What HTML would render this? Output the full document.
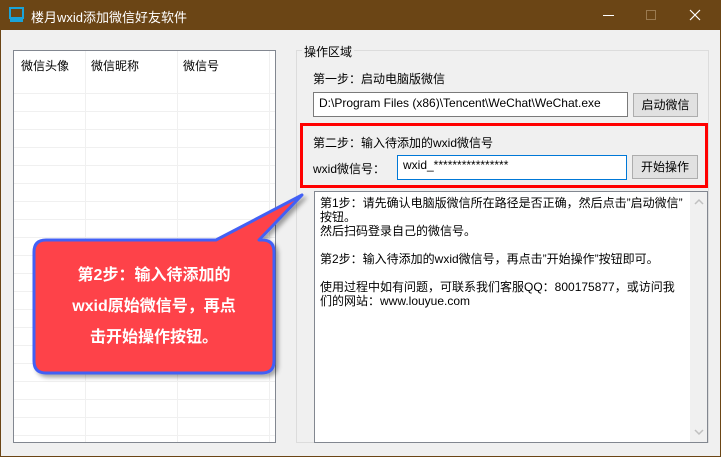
<!DOCTYPE html>
<html><head><meta charset="utf-8"><style>
*{margin:0;padding:0;box-sizing:border-box}
body{width:721px;height:457px;overflow:hidden;background:#6b4515;font-family:"Liberation Sans","Noto Sans CJK SC",sans-serif;font-size:12px;color:#000;position:relative}
.a{position:absolute}
#client{left:1px;top:30px;width:719px;height:426px;background:#f0f0f0}
.tb{background:#fff;border:1px solid #7a7a7a}
.btn{background:#e1e1e1;border:1px solid #adadad;text-align:center;line-height:22px}
</style></head><body>
<svg class="a" style="left:9px;top:7px" width="16" height="16"><rect x="1" y="1" width="13" height="10" fill="none" stroke="#1aa3d8" stroke-width="2"/><rect x="1" y="12" width="13" height="3" fill="#1aa3d8"/></svg>
<div class="a" style="left:31px;top:7px;color:#fff;font-size:13px">楼月wxid添加微信好友软件</div>
<div class="a" style="left:603px;top:15px;width:11px;height:1px;background:#fff"></div>
<div class="a" style="left:646px;top:10px;width:10px;height:10px;border:1px solid #9a7a50"></div>
<svg class="a" style="left:689px;top:9px" width="12" height="12"><path d="M1 1L11 11M11 1L1 11" stroke="#fff" stroke-width="1.2"/></svg>
<div id="client" class="a"></div>
<div class="a" style="left:13px;top:50px;width:263px;height:393px;background:#fff;border:1px solid #828790;overflow:hidden">
 <div class="a" style="left:0;top:25px;width:261px;height:370px;background:repeating-linear-gradient(to bottom,#fff 0 17px,#f0f0f0 17px 18px)"></div>
 <div class="a" style="left:71px;top:0;width:1px;height:393px;background:#f0f0f0"></div>
 <div class="a" style="left:163px;top:0;width:1px;height:393px;background:#f0f0f0"></div>
 <div class="a" style="left:255px;top:0;width:1px;height:393px;background:#f0f0f0"></div>
 <div class="a" style="left:7px;top:6px">微信头像</div>
 <div class="a" style="left:77px;top:6px">微信昵称</div>
 <div class="a" style="left:169px;top:6px">微信号</div>
</div>
<div class="a" style="left:296px;top:50px;width:413px;height:393px;border:1px solid #dcdcdc"></div>
<div class="a" style="left:302px;top:43px;background:#f0f0f0;padding:0 2px">操作区域</div>
<div class="a" style="left:313px;top:70px">第一步：启动电脑版微信</div>
<div class="a tb" style="left:313px;top:92px;width:315px;height:25px;padding:3px 5px">D:\Program Files (x86)\Tencent\WeChat\WeChat.exe</div>
<div class="a btn" style="left:633px;top:93px;width:65px;height:24px">启动微信</div>
<div class="a" style="left:300px;top:123px;width:408px;height:65px;border:3px solid #ff0000"></div>
<div class="a" style="left:313px;top:134px">第二步：输入待添加的wxid微信号</div>
<div class="a" style="left:313px;top:160px">wxid微信号：</div>
<div class="a tb" style="left:397px;top:155px;width:230px;height:25px;border-color:#0078d7;padding:2px 5px">wxid_****************</div>
<div class="a btn" style="left:632px;top:155px;width:66px;height:24px">开始操作</div>
<div class="a tb" style="left:314px;top:191px;width:394px;height:252px;border-color:#828790">
 <div class="a" style="left:5px;top:4px;white-space:nowrap;line-height:14px">第1步：请先确认电脑版微信所在路径是否正确，然后点击”启动微信”<br>按钮。<br>然后扫码登录自己的微信号。<br><br>第2步：输入待添加的wxid微信号，再点击”开始操作”按钮即可。<br><br>使用过程中如有问题，可联系我们客服QQ：800175877，或访问我<br>们的网站：www.louyue.com</div>
 <div class="a" style="left:375px;top:0;width:17px;height:250px;background:#f0f0f0"></div>
 <svg class="a" style="left:379px;top:6px" width="10" height="8"><path d="M1 6L5 2L9 6" stroke="#c0c0c0" fill="none" stroke-width="1.5"/></svg>
 <svg class="a" style="left:379px;top:236px" width="10" height="8"><path d="M1 2L5 6L9 2" stroke="#c0c0c0" fill="none" stroke-width="1.5"/></svg>
</div>
<svg class="a" style="left:0;top:0" width="721" height="457">
<defs><filter id="s"><feDropShadow dx="3" dy="3" stdDeviation="2" flood-color="#000" flood-opacity="0.35"/></filter></defs>
<path d="M46 240 L216 240 L302 195 L259 240 L262 240 Q274 240 274 252 L274 361 Q274 373 262 373 L46 373 Q34 373 34 361 L34 252 Q34 240 46 240 Z" fill="#fe4348" stroke="#4360f5" stroke-width="3" stroke-linejoin="round" filter="url(#s)"/>
</svg>
<div class="a" style="left:34px;top:260px;width:240px;text-align:center;color:#fff;font-weight:bold;font-size:16px;line-height:31px">第2步：输入待添加的<br>wxid原始微信号，再点<br>击开始操作按钮。</div>
</body></html>
